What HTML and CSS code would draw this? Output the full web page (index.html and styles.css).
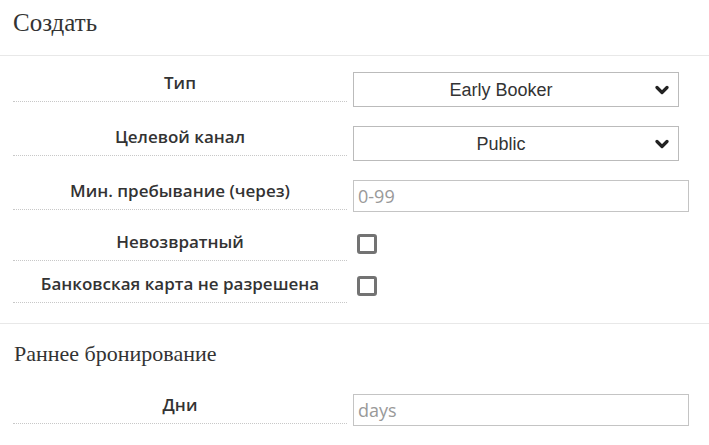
FILE: index.html
```html
<!DOCTYPE html>
<html lang="ru">
<head>
<meta charset="utf-8">
<link rel="stylesheet" href="styles.css">
</head>
<body>
<div class="page">
  <h1 class="title">Создать</h1>
  <hr class="sep">
  <div class="form">
    <div class="row">
      <label class="lbl">Тип</label>
      <div class="sel-wrap">
        <select class="sel"><option>Early Booker</option></select>
        <svg class="chev" width="14" height="10" viewBox="0 0 14 10"><path d="M2 2.5 L7 7.5 L12 2.5" fill="none" stroke="#222" stroke-width="3.2" stroke-linecap="round" stroke-linejoin="round"/></svg>
      </div>
    </div>
    <div class="row">
      <label class="lbl">Целевой канал</label>
      <div class="sel-wrap">
        <select class="sel"><option>Public</option></select>
        <svg class="chev" width="14" height="10" viewBox="0 0 14 10"><path d="M2 2.5 L7 7.5 L12 2.5" fill="none" stroke="#222" stroke-width="3.2" stroke-linecap="round" stroke-linejoin="round"/></svg>
      </div>
    </div>
    <div class="row">
      <label class="lbl">Мин. пребывание (через)</label>
      <input class="inp" type="text" placeholder="0-99">
    </div>
    <div class="row row-chk">
      <label class="lbl">Невозвратный</label>
      <span class="chk"></span>
    </div>
    <div class="row row-last">
      <label class="lbl">Банковская карта не разрешена</label>
      <span class="chk"></span>
    </div>
  </div>
  <hr class="sep">
  <h2 class="subtitle">Раннее бронирование</h2>
  <div class="form">
    <div class="row">
      <label class="lbl">Дни</label>
      <input class="inp" type="text" placeholder="days">
    </div>
  </div>
</div>
</body>
</html>
```
FILE: styles.css
```css
html, body {
  margin: 0;
  padding: 0;
  background: #fff;
}
.page {
  width: 709px;
  color: #333;
  font-family: "Open Sans", sans-serif;
}
.title {
  margin: 0;
  padding: 9px 13px 0;
  height: 55px;
  box-sizing: border-box;
  font-family: "Liberation Serif", serif;
  font-weight: normal;
  font-size: 25px;
  line-height: 28px;
  color: #333;
}
.sep {
  margin: 0;
  border: 0;
  border-top: 1px solid #e8e8e8;
  height: 0;
}
.form {
  padding: 16px 20px 0 13px;
}
.row {
  display: flex;
  align-items: flex-start;
  gap: 6px;
  margin-bottom: 19px;
}
.row-chk {
  margin-bottom: 12px;
}
.row-last {
  margin-bottom: 20px;
}
.lbl {
  width: 334px;
  flex: none;
  text-align: center;
  font-weight: 600;
  font-size: 17px;
  line-height: 22px;
  padding-bottom: 7px;
  border-bottom: 1px dotted #c8c8c8;
  color: #333;
}
.sel-wrap {
  position: relative;
  width: 326px;
  height: 35px;
}
.sel {
  appearance: none;
  -webkit-appearance: none;
  display: block;
  width: 100%;
  height: 35px;
  box-sizing: border-box;
  border: 1px solid #bbb;
  border-radius: 0;
  background: #fff;
  font-family: "Liberation Sans", Arial, sans-serif;
  font-size: 18px;
  color: #333;
  text-align: center;
  text-align-last: center;
  padding: 0 32px 0 2px;
}
.chev {
  position: absolute;
  right: 10px;
  top: 13px;
  pointer-events: none;
}
.inp {
  display: block;
  width: 336px;
  height: 32px;
  box-sizing: border-box;
  border: 1px solid #c4c4c4;
  border-radius: 0;
  padding: 0 4px;
  font-family: "Open Sans", sans-serif;
  font-size: 18px;
  color: #333;
  outline: none;
}
.inp::placeholder {
  color: #999;
}
.chk {
  display: block;
  width: 20px;
  height: 20px;
  box-sizing: border-box;
  border: 3px solid #737373;
  border-radius: 3px;
  margin: 3px 0 0 4px;
}
.subtitle {
  margin: 0;
  padding: 17px 14px 0;
  height: 54px;
  box-sizing: border-box;
  font-family: "Liberation Serif", serif;
  font-weight: normal;
  font-size: 22px;
  line-height: 26px;
  color: #333;
}
```
